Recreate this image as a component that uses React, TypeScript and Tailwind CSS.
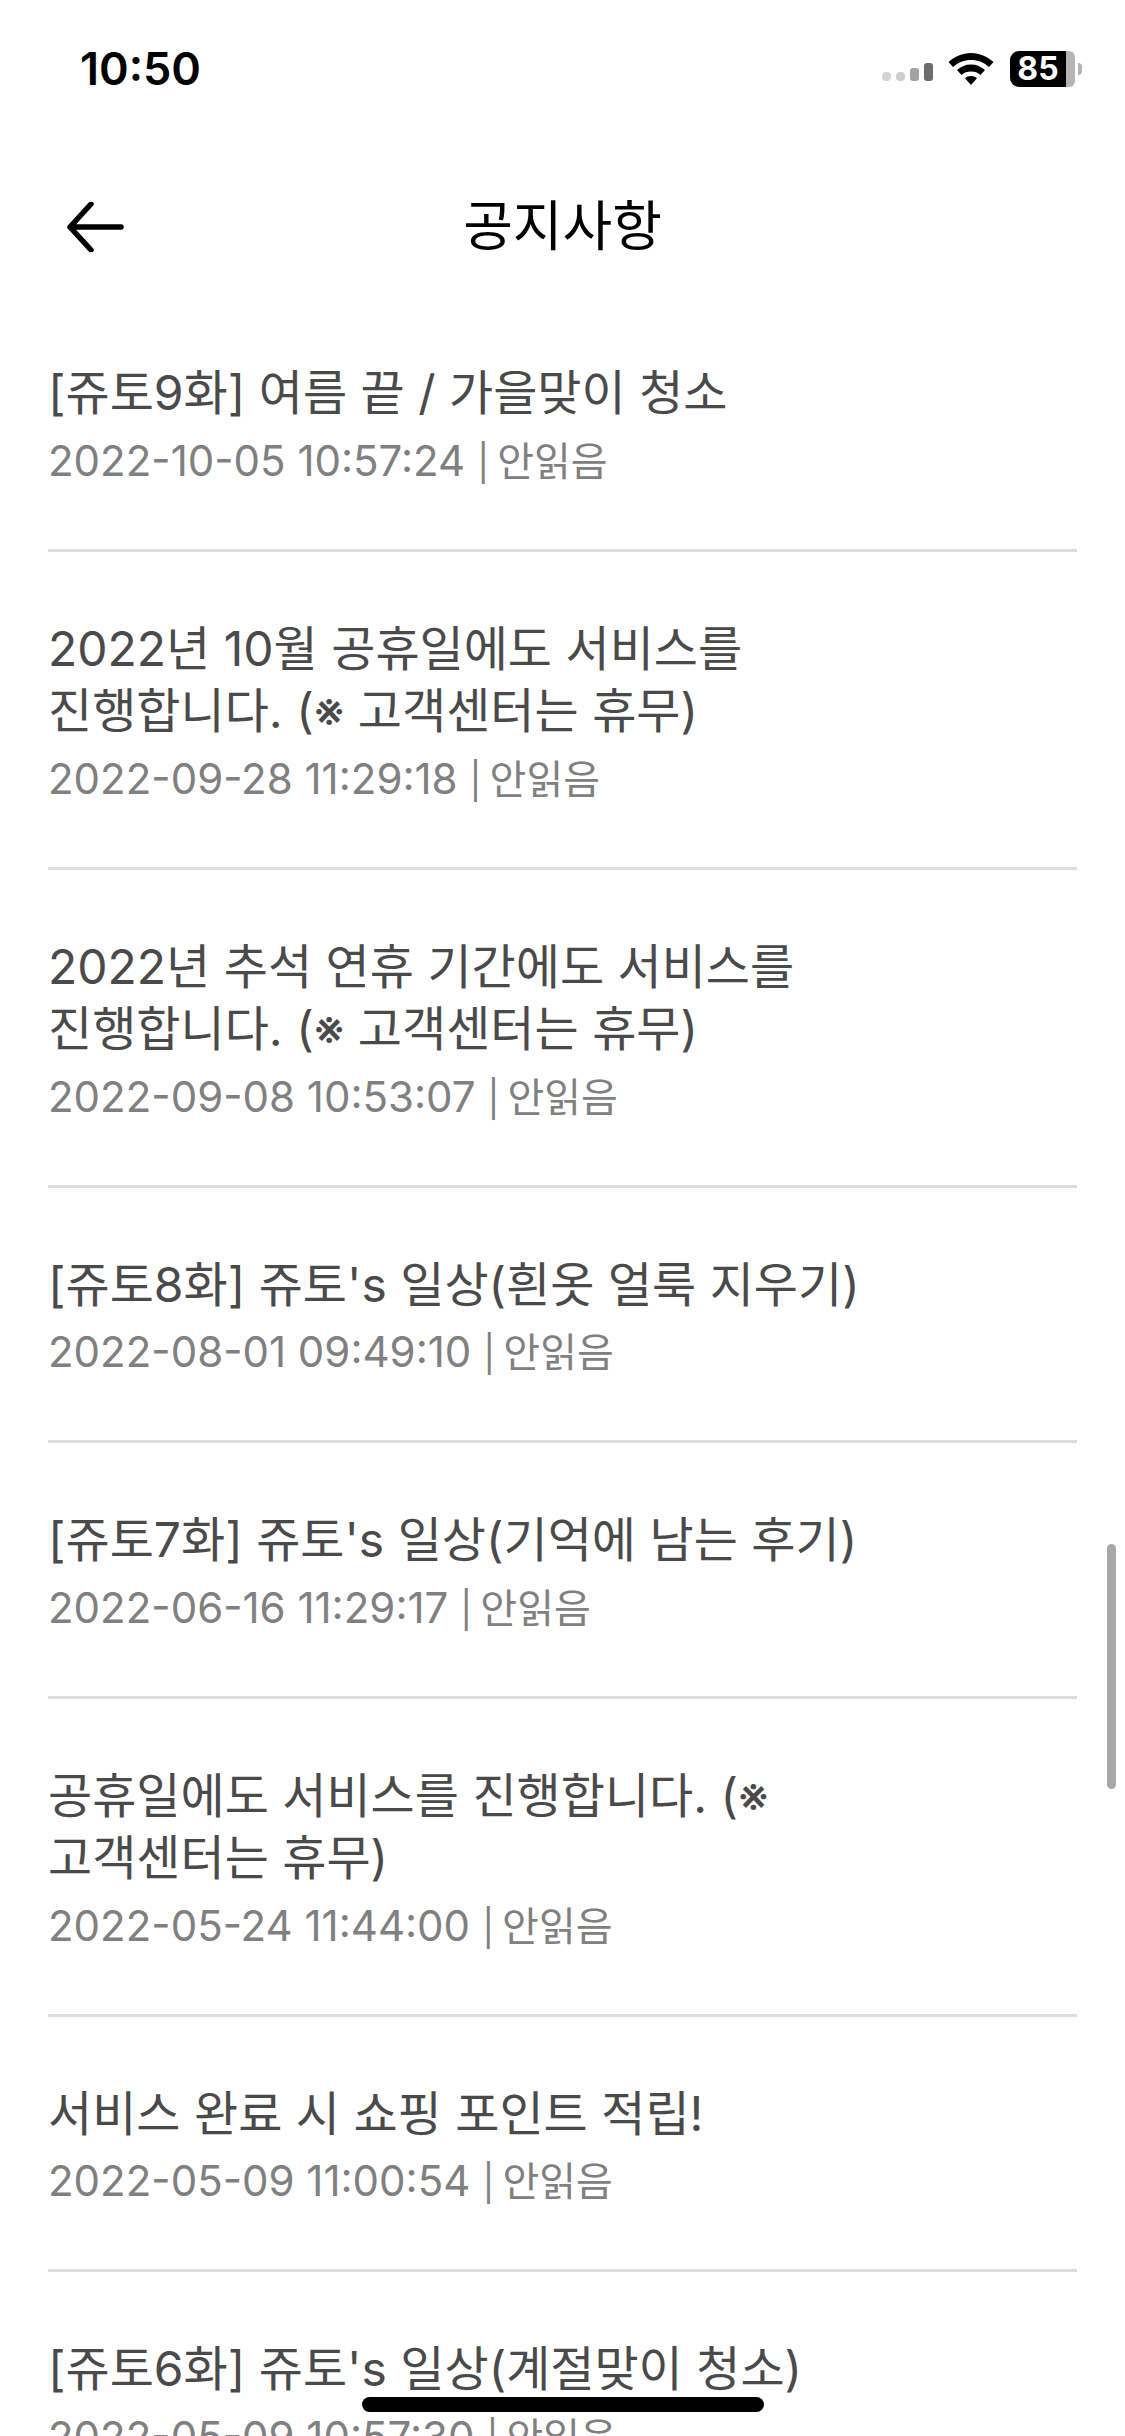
const items = [
  { t: ["[쥬토9화] 여름 끝 / 가을맞이 청소"], d: "2022-10-05 10:57:24" },
  { t: ["2022년 10월 공휴일에도 서비스를", "진행합니다. (※ 고객센터는 휴무)"], d: "2022-09-28 11:29:18" },
  { t: ["2022년 추석 연휴 기간에도 서비스를", "진행합니다. (※ 고객센터는 휴무)"], d: "2022-09-08 10:53:07" },
  { t: ["[쥬토8화] 쥬토's 일상(흰옷 얼룩 지우기)"], d: "2022-08-01 09:49:10" },
  { t: ["[쥬토7화] 쥬토's 일상(기억에 남는 후기)"], d: "2022-06-16 11:29:17" },
  { t: ["공휴일에도 서비스를 진행합니다. (※", "고객센터는 휴무)"], d: "2022-05-24 11:44:00" },
  { t: ["서비스 완료 시 쇼핑 포인트 적립!"], d: "2022-05-09 11:00:54" },
  { t: ["[쥬토6화] 쥬토's 일상(계절맞이 청소)"], d: "2022-05-09 10:57:30" },
];

export default function App() {
  return (
    <div className="relative h-[2436px] w-[1125px] overflow-hidden bg-white font-['Inter','Noto_Sans_CJK_KR',sans-serif]">
      <div className="flex h-[136px] items-center justify-between pl-[80px] pr-[43px] pt-[2px]">
        <span className="text-[45px] font-semibold text-black">10:50</span>
        <div className="flex items-center">
          <svg width="52" height="20" viewBox="0 0 52 20" className="mr-[14px] mt-[8px]">
            <rect x="0" y="9" width="9" height="9" rx="4" fill="#d4d4d4" />
            <rect x="14" y="9" width="9" height="9" rx="4" fill="#cdcdcd" />
            <rect x="28" y="5" width="9" height="13" rx="3" fill="#a3a3a3" />
            <rect x="42" y="0" width="9" height="18" rx="3" fill="#6b6b6b" />
          </svg>
          <svg width="46" height="34" viewBox="0 0 46 34" className="mr-[16px]">
            <path d="M23 1C14 1 7 4.500 0.500 10L5 15C10 10.500 16 8 23 8C30 8 36 10.500 41 15L45.500 10C39 4.500 32 1 23 1Z" fill="#000" />
            <path d="M23 12.500C17.500 12.500 13 14.500 9 18L13.500 23C16 20.500 19 19.500 23 19.500C27 19.500 30 20.500 32.500 23L37 18C33 14.500 28.500 12.500 23 12.500Z" fill="#000" />
            <path d="M23 24C20.500 24 18.800 24.800 17 26.300L23 33L29 26.300C27.200 24.800 25.500 24 23 24Z" fill="#000" />
          </svg>
          <div className="flex h-[36px] w-[56px] items-center justify-center rounded-l-[9px] bg-black text-[32px] font-bold leading-none text-white">85</div>
          <div className="h-[36px] w-[9px] rounded-r-[6px] bg-[#b5b5b5]" />
          <div className="ml-[3px] h-[12px] w-[4px] rounded-r-full bg-[#b5b5b5]" />
        </div>
      </div>
      <div className="relative flex h-[160px] items-start justify-center">
        <svg className="absolute left-[66px] top-[66px]" width="58" height="50" viewBox="0 0 58 50" fill="none" stroke="#000" strokeWidth="5.500" strokeLinecap="round" strokeLinejoin="round">
          <path d="M55 25H4M25 2L4 25L25 48" />
        </svg>
        <span className="mt-[57px] text-[54px] leading-[68px] text-black">공지사항</span>
      </div>
      <div className="flex flex-col px-[48px]">
        {items.map((it, i) => (
          <div key={i} className="flex flex-col border-b-[3px] border-[#dedede] pb-[62px] pt-[66px]">
            <div className="text-[48px] leading-[62.5px] text-[#4a4a4a]">
              {it.t.map((l, j) => (
                <div key={j}>{l}</div>
              ))}
            </div>
            <div className="mt-[10px] flex h-[52px] items-baseline text-[42px] leading-[52px] text-[#808080]">
              <span>{it.d}</span>
              <span className="ml-[12px] text-[36px]">|</span>
              <span className="ml-[8px] text-[40px]">안읽음</span>
            </div>
          </div>
        ))}
      </div>
      <div className="absolute left-[1107px] top-[1544px] h-[245px] w-[9px] rounded-full bg-[#a8a8a8]" />
      <div className="absolute bottom-[24px] left-[362px] h-[15px] w-[402px] rounded-full bg-black" />
    </div>
  );
}
